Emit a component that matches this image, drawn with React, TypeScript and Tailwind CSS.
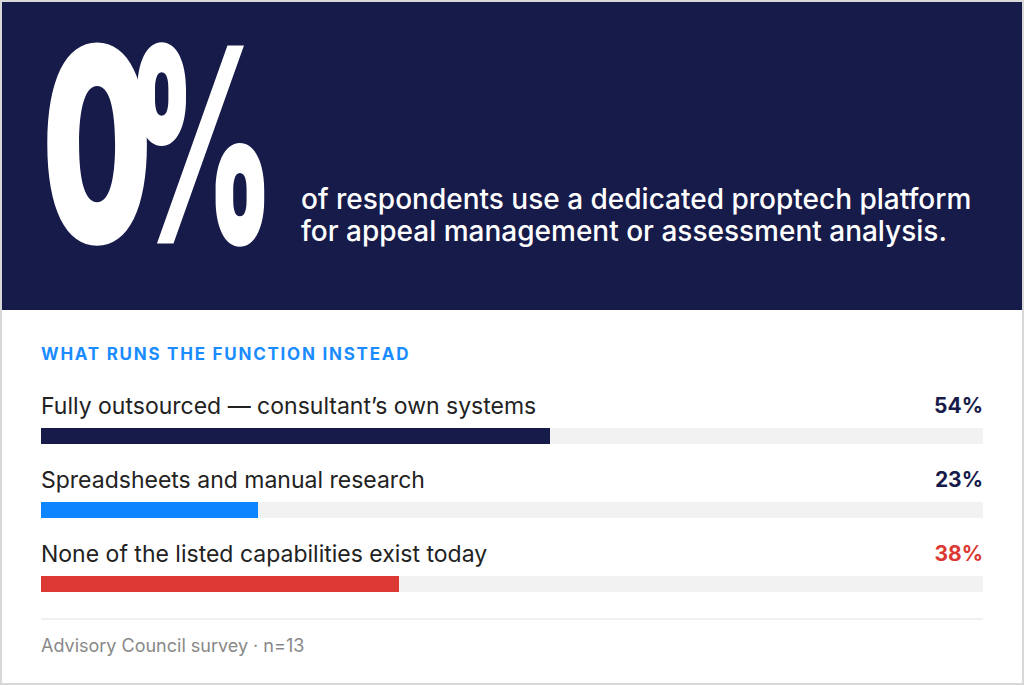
import React from 'react';

const rows = [
  { label: 'Fully outsourced — consultant’s own systems', value: 54, bar: 'bg-[#171b4a]', text: 'text-[#171b4a]' },
  { label: 'Spreadsheets and manual research', value: 23, bar: 'bg-[#0d85ff]', text: 'text-[#171b4a]' },
  { label: 'None of the listed capabilities exist today', value: 38, bar: 'bg-[#dc3934]', text: 'text-[#dc3934]' },
];

export default function App() {
  return (
    <div
      className="w-[1024px] h-[685px] border-2 border-[#d8d8d8] bg-white overflow-hidden"
      style={{ fontFamily: 'Inter, "Liberation Sans", sans-serif' }}
    >
      {/* Stat header */}
      <div className="h-[308px] bg-[#171b4a] flex">
        <div className="w-[299px] shrink-0 pt-[6px] pl-[40px] flex items-start text-white font-black leading-none">
          <span className="inline-block h-[272px] text-[155px] tracking-[-25px] origin-top-left scale-y-[1.755]">0</span>
          <span className="inline-block h-[272px] text-[141px] origin-top-left scale-y-[1.93]">%</span>
        </div>
        <p className="self-end pb-[63px] text-white text-[28px] leading-[32px] font-medium">
          of respondents use a dedicated proptech platform
          <br />
          for appeal management or assessment analysis.
        </p>
      </div>

      {/* Breakdown */}
      <div className="px-[39px] pt-[34px]">
        <h3 className="text-[#1a8cff] text-[17px] leading-[20px] font-bold tracking-[1.75px] uppercase">
          What runs the function instead
        </h3>
        <div className="mt-[29px] flex flex-col gap-[23px]">
          {rows.map((r) => (
            <div key={r.label}>
              <div className="flex items-center justify-between h-[26px]">
                <span className="text-[23px] text-[#222222]">{r.label}</span>
                <span className={`text-[21px] font-bold ${r.text}`}>{r.value}%</span>
              </div>
              <div className="mt-[9px] h-[16px] bg-[#f2f2f2]">
                <div className={`h-full ${r.bar}`} style={{ width: `${r.value}%` }} />
              </div>
            </div>
          ))}
        </div>
        <div className="mt-[26px] border-t-2 border-[#f0f0f0]" />
        <p className="mt-[15px] text-[18px] leading-[22px] text-[#888888]">Advisory Council survey · n=13</p>
      </div>
    </div>
  );
}
